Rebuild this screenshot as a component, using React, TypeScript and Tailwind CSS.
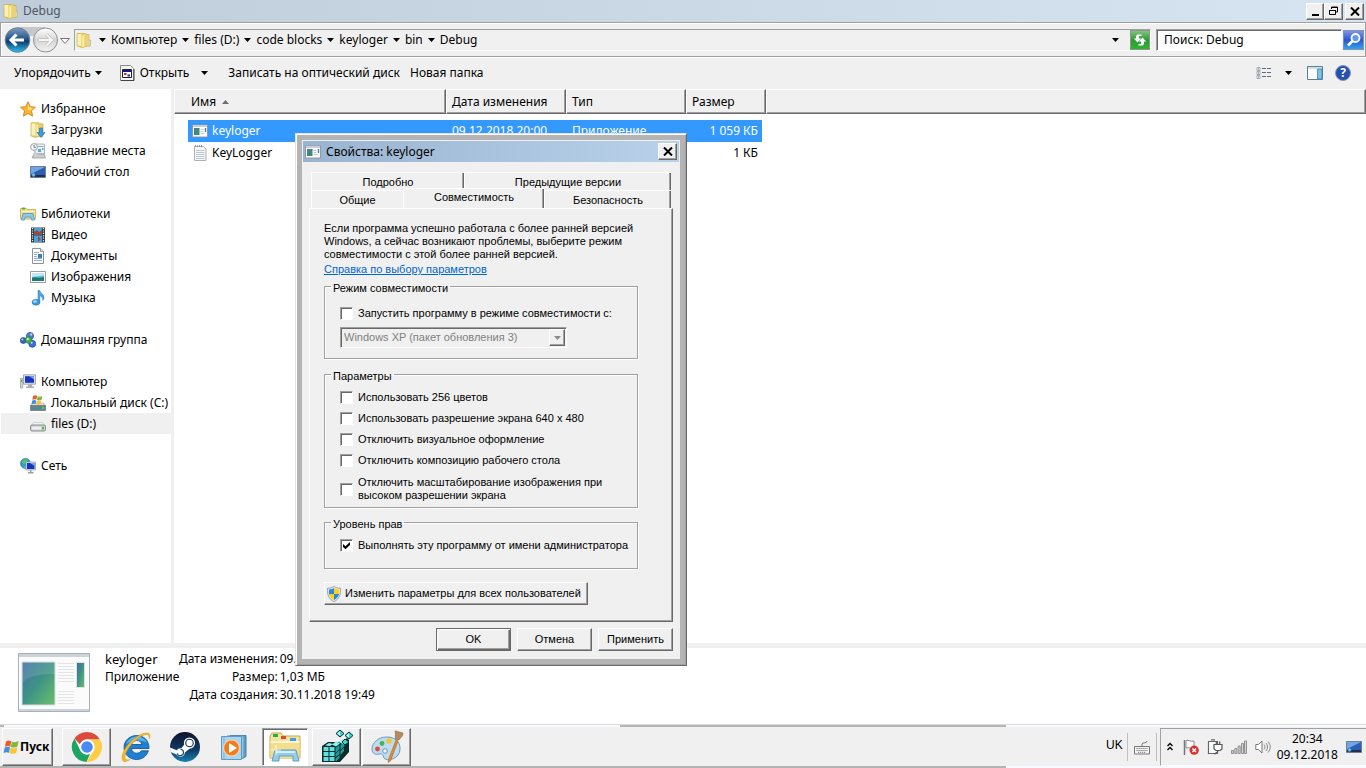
import React, { useState } from "react";

const raised =
  "border border-t-white border-l-white border-r-[#696969] border-b-[#696969] shadow-[inset_-1px_-1px_0_#a0a0a0] bg-[#f0f0f0]";
const sunken =
  "border border-t-[#a0a0a0] border-l-[#a0a0a0] border-r-white border-b-white shadow-[inset_1px_1px_0_#696969]";

type IconProps = { className?: string };

const Folder = ({ className = "size-4" }: IconProps) => (
  <svg viewBox="0 0 16 16" className={className}>
    <path d="M1 1.500h8.500l1 1h2.500V8h1.500v6l-5 .5-3 1.300L1 14z" fill="#e5c85f" stroke="#c9a83e" strokeWidth=".6" />
    <path d="M1.500 2h4v12l-4-.5z" fill="#fbf1b4" />
    <path d="M5.500 3l4-1.500v12.500l-4 1.700z" fill="#f0d878" />
    <path d="M6.500 4l1.500-.6v11l-1.500.6z" fill="#fbf0b2" />
    <path d="M9.500 3h3.300v11l-3.300.3z" fill="#ecd27a" />
    <path d="M12.500 8.500h1.700v5h-1.700z" fill="#c7d9dc" />
  </svg>
);

const Star = () => (
  <svg viewBox="0 0 16 16" className="size-4">
    <path
      d="M8 .8l2.200 4.900 5.200.5-3.900 3.600 1.100 5.300L8 12.400l-4.600 2.700 1.100-5.300L.6 6.200l5.200-.5z"
      fill="#ffb42e"
      stroke="#d97c1c"
      strokeWidth=".9"
    />
    <path d="M8 3l1.400 3.600 3.600.4-2.800 2.300L8 9z" fill="#ffe38a" />
  </svg>
);

const Downloads = () => (
  <svg viewBox="0 0 16 16" className="size-4">
    <path d="M1 .8h8l1 1h3v12.500l-5 .2-2 1L1 14z" fill="#e9cf70" stroke="#c9a83e" strokeWidth=".7" />
    <path d="M1.500 1.500h4v12l-4-.3z" fill="#fbf1b4" />
    <path d="M6.500 3l1.500-.6v11l-1.500.6z" fill="#fbf0b2" />
    <path d="M9.500 6h3v4.500H15L11 15.500 7 10.500h2.500z" fill="#3d9be0" stroke="#1c6fb5" strokeWidth=".6" />
  </svg>
);

const Recent = () => (
  <svg viewBox="0 0 16 16" className="size-4">
    <path d="M5 1h9.500v10H5z" fill="#eef2f5" stroke="#9aa5ad" strokeWidth=".8" />
    <path d="M8 6h3v3H8zM12 5h1.500v2H12z" fill="#5aa9dc" />
    <path d="M7.500 3.500h6" stroke="#9aa5ad" />
    <path d="M4 11h10l1.500 4H2z" fill="#c9ced2" stroke="#8a9298" strokeWidth=".7" />
    <path d="M4 8l3 2v2H3z" fill="#c9ced2" />
    <circle cx="4" cy="4" r="3.400" fill="#f4f8fb" stroke="#8f9aa3" strokeWidth=".9" />
    <path d="M4 2v2.300h1.800" fill="none" stroke="#4b5961" strokeWidth=".8" />
  </svg>
);

const Desktop = ({ className = "size-4" }: IconProps) => (
  <svg viewBox="0 0 16 16" className={className}>
    <path d="M.5 2.500h15v11H.5z" fill="#2c5fb4" stroke="#6d7f96" />
    <path d="M1 3h14L1 10z" fill="#6fa6e6" />
    <path d="M1 11h14v2H1z" fill="#22304c" />
    <circle cx="3.500" cy="11" r="1.800" fill="#4fb4ea" />
    <path d="M3 10h1v1H3z" fill="#f7c438" />
  </svg>
);

const Libraries = () => (
  <svg viewBox="0 0 16 16" className="size-4">
    <path d="M.5 2.500h6l1 1h8v9.500H.5z" fill="#f1dc87" stroke="#c9aa4b" strokeWidth=".8" />
    <path d="M2 1.500h3v2H2z" fill="#46b548" />
    <path d="M1 5h14v1H1z" fill="#fdf4c4" />
    <path d="M3 7.500h10l1.500 6.500h-3l-.7-3H5.200l-.7 3h-3z" fill="#8cc9ec" stroke="#4d95c4" strokeWidth=".8" />
  </svg>
);

const Video = () => (
  <svg viewBox="0 0 16 16" className="size-4">
    <path d="M1 .5h14v15H1z" fill="#343a40" />
    <path d="M4 1h8v6.500H4zM4 8.500h8V15H4z" fill="#4aa2dc" />
    <path d="M4 5l3-2 2 2 3-2v4.500H4zM8 9l3 3-3 3z" fill="#9b4a3c" />
    <path d="M2.500 1v14M13.500 1v14" stroke="#d9ecec" strokeWidth="1.200" strokeDasharray="1.200 1.200" />
  </svg>
);

const Documents = () => (
  <svg viewBox="0 0 16 16" className="size-4">
    <path d="M2.500.5h8l3 3v12h-11z" fill="#fff" stroke="#7b868f" strokeWidth=".9" />
    <path d="M10.500.5v3h3" fill="#dfe5ea" stroke="#7b868f" strokeWidth=".8" />
    <path d="M4 4.500h5M4 6.500h3M4 8.500h3M4 10.500h8M4 12.500h8" stroke="#8fa3ce" strokeWidth=".9" />
    <path d="M8 6h4v4H8z" fill="#3c7dcb" />
  </svg>
);

const Pictures = () => (
  <svg viewBox="0 0 16 16" className="size-4">
    <path d="M.5 2.500h15v11H.5z" fill="#fff" stroke="#8b949b" strokeWidth=".9" />
    <path d="M2 4h12v8H2z" fill="#5cb5e6" />
    <path d="M2 4h12v2.500L2 8z" fill="#c4e6f7" />
    <path d="M2 9c3-2 6 1 12-1v4H2z" fill="#1d7b70" />
  </svg>
);

const Music = () => (
  <svg viewBox="0 0 16 16" className="size-4">
    <path d="M8 .5h1.800c.2 3 4.200 3 4.200 7 0 1.500-.8 2.500-1.200 3C13.200 7.500 11 6 9.800 5.800V12H8z" fill="#4aa6e4" stroke="#2277b8" strokeWidth=".5" />
    <ellipse cx="6" cy="12.300" rx="4" ry="3" fill="#3698de" stroke="#2277b8" strokeWidth=".5" />
    <ellipse cx="5" cy="11.500" rx="2" ry="1.200" fill="#a5d8f6" />
  </svg>
);

const HomeGroup = () => (
  <svg viewBox="0 0 16 16" className="size-4">
    <circle cx="10" cy="4" r="3.600" fill="#4e7fd0" stroke="#25479e" strokeWidth=".7" />
    <circle cx="3.300" cy="8.500" r="3" fill="#3763c4" stroke="#25479e" strokeWidth=".7" />
    <circle cx="12.300" cy="11.800" r="3.500" fill="#3d6fd0" stroke="#25479e" strokeWidth=".7" />
    <circle cx="8.500" cy="8" r="3.300" fill="#45b04b" stroke="#277a35" strokeWidth=".7" />
    <circle cx="7.700" cy="6.900" r="1.200" fill="#c8f0c4" />
    <circle cx="11.200" cy="2.600" r="1.100" fill="#c2dcf8" />
    <circle cx="11.600" cy="10.800" r="1" fill="#c2dcf8" />
    <circle cx="2.400" cy="7.500" r=".9" fill="#c2dcf8" />
  </svg>
);

const Computer = () => (
  <svg viewBox="0 0 16 16" className="size-4">
    <path d="M3.500.8h12v9.400h-12z" fill="#dfe3e6" stroke="#8f979d" strokeWidth=".8" />
    <path d="M5 2.200h9v6.600H5z" fill="#1634c4" />
    <path d="M9 2.200h5v3z" fill="#7ea2f4" />
    <path d="M8 10.500h4v2H8zM6 12.500h8v1.500H6z" fill="#a8aeb3" />
    <path d="M.5 4.500h2.200V14H.5z" fill="#d5d9dc" stroke="#8f979d" strokeWidth=".7" />
    <path d="M1 6h1v2H1z" fill="#3fb34a" />
  </svg>
);

const Flag = ({ className = "size-4" }: IconProps) => (
  <svg viewBox="0 0 16 16" className={className}>
    <path d="M3 2.500C5 1 6.500 1.300 8.300 2.300L7.200 7.700C5.500 6.700 4 6.700 1.900 7.700z" fill="#ee5a2a" />
    <path d="M8.900 2.600c2 1 4 .8 6.700-.5l-1.100 5.500c-2.300 1.200-4.500 1.200-6.700.3z" fill="#7cbb3b" />
    <path d="M1.700 8.500c2-1.100 3.700-1 5.300-.2l-1.100 5.500c-1.600-.9-3.300-.9-5.300.1z" fill="#3f8fe0" />
    <path d="M7.600 8.700c2 1 4 .9 6.700-.3l-1.100 5.400c-2.300 1.200-4.500 1.200-6.700.2z" fill="#fbc231" />
  </svg>
);

const SystemDrive = () => (
  <svg viewBox="0 0 16 16" className="size-4">
    <path d="M2 8h12l1.500 3H.5z" fill="#dadfe2" stroke="#9aa1a6" strokeWidth=".5" />
    <path d="M.5 10.500h15v5H.5z" fill="#57898f" stroke="#73797d" strokeWidth=".8" />
    <path d="M12 12h2v2h-2z" fill="#5fd03c" />
    <path d="M3 1c1.500-1 2.800-.8 4.100-.2L6.500 4.600c-1.300-.6-2.700-.6-4.100.2z" fill="#ee5a2a" />
    <path d="M7.600 1.200c1.500.7 2.900.6 4.700-.2l-.7 3.800c-1.600.8-3.100.8-4.600.1z" fill="#7cbb3b" />
    <path d="M2.200 5.600c1.400-.8 2.800-.7 4-.1l-.6 3.600c-1.200-.6-2.600-.6-4 .1z" fill="#3f8fe0" />
    <path d="M6.800 5.700c1.500.7 2.900.6 4.600-.2l-.7 3.600c-1.600.8-3.100.8-4.500.1z" fill="#fbc231" />
  </svg>
);

const Drive = () => (
  <svg viewBox="0 0 16 16" className="size-4">
    <path d="M3.500 6.500h9l3 4H.5z" fill="#f3f4f5" stroke="#b5b9bc" strokeWidth=".6" />
    <rect x=".5" y="9" width="15" height="6" rx="1.500" fill="#cfd2d4" stroke="#7f8487" strokeWidth=".9" />
    <path d="M2 10.800h9v2.700H2z" fill="#edeef0" />
    <path d="M12 10.800h2v2.700h-2z" fill="#52c234" />
  </svg>
);

const Network = () => (
  <svg viewBox="0 0 16 16" className="size-4">
    <circle cx="5.500" cy="5.500" r="5" fill="#2e9bd6" stroke="#1b6aa5" strokeWidth=".6" />
    <path d="M2 3c2-2 5-2 6-1L6 5 3 6zM3 8l3 1-1 1.500z" fill="#58c65a" />
    <path d="M6 4h9.500v8H6z" fill="#dfe3e6" stroke="#8f979d" strokeWidth=".7" />
    <path d="M7 5h7.500v6H7z" fill="#1634c4" />
    <path d="M10 5h4.500v3z" fill="#7ea2f4" />
    <path d="M10 12h1.500v2h2v1.500H8V14h2z" fill="#9aa1a6" />
  </svg>
);

const AppWindow = ({ className = "size-4" }: IconProps) => (
  <svg viewBox="0 0 16 16" className={className}>
    <path d="M.5 2h15v12H.5z" fill="#fdfdfd" stroke="#8d9499" strokeWidth=".9" />
    <path d="M1 2.500h14v1.500H1z" fill="#c6ced6" />
    <path d="M2 5h5.500v7H2z" fill="#3f8c74" />
    <path d="M2 5h5.500L2 9.500z" fill="#4a7fa8" />
    <path d="M8.500 6.500h3M8.500 8.500h3M8.500 10.500h4" stroke="#c5cacf" />
    <path d="M12.800 5h1.400v4h-1.400z" fill="#4a83a0" />
  </svg>
);

const TextFile = () => (
  <svg viewBox="0 0 16 16" className="size-4">
    <path d="M2.500 1.500h9l2.500 2.500v11.500H2.500z" fill="#f4f6f7" stroke="#9aa0a4" strokeWidth=".8" />
    <path d="M4 5.500h8.500M4 7.500h8.500M4 9.500h8.500M4 11.500h8.500M4 13.500h8.500" stroke="#b6c5cf" strokeWidth=".9" />
    <path d="M3 1h8" stroke="#7d858a" strokeWidth="1.600" strokeDasharray="1 1" />
  </svg>
);

const Arrow = () => (
  <svg viewBox="0 0 7 4" className="h-1 w-[7px] shrink-0">
    <path d="M0 0h7L3.500 4z" fill="#000" />
  </svg>
);

const Shield = () => (
  <svg viewBox="0 0 16 16" className="size-4 shrink-0">
    <path d="M8 .4c2 1.400 4 1.800 6.500 1.800C15 8 13.500 13 8 15.700 2.500 13 1 8 1.500 2.200 4 2.200 6 1.800 8 .4z" fill="#e4e8ec" stroke="#8c949b" strokeWidth=".8" />
    <path d="M8 2v6H3C2.800 6.500 2.800 5 3 3.500 5 3.400 6.500 3 8 2z" fill="#2f86dc" />
    <path d="M8 2v6h5c.2-1.500.2-3 0-4.500C11 3.400 9.500 3 8 2z" fill="#fcd116" />
    <path d="M8 8v6c-3-1.600-4.500-3.500-5-6z" fill="#fcd116" />
    <path d="M8 8v6c3-1.600 4.500-3.500 5-6z" fill="#2f86dc" />
  </svg>
);

const sidebar = [
  [
    { name: "Избранное", icon: <Star /> },
    { name: "Загрузки", icon: <Downloads /> },
    { name: "Недавние места", icon: <Recent /> },
    { name: "Рабочий стол", icon: <Desktop /> },
  ],
  [
    { name: "Библиотеки", icon: <Libraries /> },
    { name: "Видео", icon: <Video /> },
    { name: "Документы", icon: <Documents /> },
    { name: "Изображения", icon: <Pictures /> },
    { name: "Музыка", icon: <Music /> },
  ],
  [{ name: "Домашняя группа", icon: <HomeGroup /> }],
  [
    { name: "Компьютер", icon: <Computer /> },
    { name: "Локальный диск (C:)", icon: <SystemDrive /> },
    { name: "files (D:)", icon: <Drive />, active: true },
  ],
  [{ name: "Сеть", icon: <Network /> }],
];

const crumbs = ["Компьютер", "files (D:)", "code blocks", "keyloger", "bin", "Debug"];

function TitleBar() {
  return (
    <header className="flex h-[22px] items-center bg-linear-to-r from-[#bfcddb] to-[#d7e4f2] pl-[3px] pr-[2px]">
      <Folder />
      <h1 className="ml-1 flex-1 text-[#4c5560]">Debug</h1>
      <button aria-label="Свернуть" className={`${raised} flex h-[17px] w-[18px] items-end justify-center pb-[3px]`}>
        <span className="h-[2px] w-[7px] bg-black" />
      </button>
      <button aria-label="Восстановить" className={`${raised} flex h-[17px] w-[19px] items-center justify-center`}>
        <svg viewBox="0 0 11 10" className="h-[10px] w-[11px]">
          <path d="M3.500 3V1h6v5H8M3 1.500h7M1.500 4.500h6v4h-6zM1 4.500h7" fill="none" stroke="#000" />
        </svg>
      </button>
      <button aria-label="Закрыть" className={`${raised} ml-[2px] flex h-[17px] w-[19px] items-center justify-center`}>
        <svg viewBox="0 0 10 9" className="h-[9px] w-[10px]">
          <path d="M1 .5l8 8M9 .5l-8 8" stroke="#000" strokeWidth="2" />
        </svg>
      </button>
    </header>
  );
}

function AddressBar() {
  return (
    <div className="flex h-[35px] items-center border border-[#a0a0a0] shadow-[inset_1px_1px_0_#fff] pl-[3px] pr-px">
      <svg viewBox="0 0 67 28" className="h-7 w-[67px]">
        <defs>
          <linearGradient id="back" x1="0" y1="0" x2="0" y2="1">
            <stop offset="0" stopColor="#7d9fc0" />
            <stop offset=".5" stopColor="#1d4f84" />
            <stop offset=".55" stopColor="#0d3a6b" />
            <stop offset="1" stopColor="#2bc0f4" />
          </linearGradient>
          <linearGradient id="fwd" x1="0" y1="0" x2="0" y2="1">
            <stop offset="0" stopColor="#fff" />
            <stop offset=".5" stopColor="#d4d4d4" />
            <stop offset="1" stopColor="#f4f4f4" />
          </linearGradient>
        </defs>
        <path d="M14 1h27v6c-6 4-20 4-27 0z" fill="#c4c8cc" />
        <circle cx="13.500" cy="14" r="12.300" fill="url(#back)" stroke="#6c7f92" />
        <path d="M7 14h13M12.500 8.500L7 14l5.500 5.500" fill="none" stroke="#fff" strokeWidth="3" />
        <circle cx="41.500" cy="14" r="12" fill="url(#fwd)" stroke="#8b8f93" />
        <path d="M35 14h13M42.500 8.500L48 14l-5.500 5.500" fill="none" stroke="#bfbfbf" strokeWidth="3.400" />
        <path d="M35 14h12.500M42.500 8.500L48 14l-5.500 5.500" fill="none" stroke="#f5f5f5" strokeWidth="2" />
        <path d="M56.500 12.500h9l-4.500 5z" fill="#fff" stroke="#777" />
      </svg>
      <nav className="ml-[3px] flex h-[22px] flex-1 items-center border border-t-[#a0a0a0] border-l-[#a0a0a0] border-r-white border-b-white pl-px">
        <Folder className="mr-[2px] size-4" />
        {crumbs.map((crumb) => (
          <div key={crumb} className="flex items-center">
            <span className="flex w-[17px] justify-center">
              <Arrow />
            </span>
            <a href="#">{crumb}</a>
          </div>
        ))}
        <span className="ml-auto mr-[11px]">
          <Arrow />
        </span>
        <button aria-label="Обновить" className="flex size-5 items-center justify-center border border-[#8a9a8a] bg-linear-to-b from-[#7cc67c] via-[#2f9a35] to-[#2db52f]">
          <svg viewBox="0 0 18 18" className="size-[18px]">
            <path d="M6 3.500h4.500v1.500H8v2.500h2.200L6.500 11.500 2.800 7.500H5V5.500z" fill="#fff" />
            <path d="M12 14.500H7.500V13H10v-2.500H7.800l3.700-4 3.700 4H13v2z" fill="#fff" />
          </svg>
        </button>
      </nav>
      <input
        type="text"
        aria-label="Поиск"
        defaultValue="Поиск: Debug"
        className={`${sunken} ml-[5px] h-[22px] w-[186px] bg-white pl-[7px]`}
      />
      <button aria-label="Найти" className="ml-px flex h-5 w-[21px] items-center justify-center border border-[#7f93b5] bg-linear-to-b from-[#7f93e6] via-[#2a55cf] to-[#35a4f0]">
        <svg viewBox="0 0 16 16" className="size-4">
          <circle cx="9.500" cy="6" r="4" fill="#5e9bf0" stroke="#fff" strokeWidth="1.800" />
          <path d="M6.500 9L2 13.500" stroke="#fff" strokeWidth="2.600" />
        </svg>
      </button>
    </div>
  );
}

function Toolbar() {
  return (
    <div className="flex h-8 items-center border-t border-white pr-[15px] pb-px pl-[14px]">
      <button className="flex items-center gap-1">
        Упорядочить <Arrow />
      </button>
      <button className="ml-[18px] flex items-center gap-1">
        <svg viewBox="0 0 16 16" className="size-4">
          <path d="M.5.500h10l3 3v12H.5z" fill="#f4f4f4" stroke="#8a8a8a" />
          <path d="M14 4v11.500H1" fill="none" stroke="#444" />
          <path d="M2.500 4.500h9v8h-9z" fill="#fff" stroke="#222" />
          <path d="M3 5h8v2H3z" fill="#14148c" />
          <path d="M4 8h2.500v2H4z" fill="#d22" />
          <path d="M7.500 9.500H10v2H7.500z" fill="#22b" />
        </svg>
        Открыть
      </button>
      <button aria-label="Открыть с помощью" className="ml-3 py-2">
        <Arrow />
      </button>
      <button className="ml-5">Записать на оптический диск</button>
      <button className="ml-[10px]">Новая папка</button>
      <button aria-label="Вид" className="ml-auto flex items-center gap-[13px]">
        <svg viewBox="0 0 16 14" className="h-[14px] w-4">
          <path d="M1 1.500h3v3H1zM1 5.500h3v3H1zM1 9.500h3v3H1z" fill="#fff" stroke="#8c9aa8" strokeWidth=".8" />
          <path d="M2 2.500h1v1H2z" fill="#46a" />
          <path d="M2 6.500h1v1H2z" fill="#d22" />
          <path d="M2 10.500h1v1H2z" fill="#46a" />
          <path d="M6 2.500h4M11 2.500h4M6 6.500h4M11 6.500h4M6 10.500h4M11 10.500h4" stroke="#5a6c86" />
        </svg>
        <Arrow />
      </button>
      <button aria-label="Область просмотра" className="ml-[15px]">
        <svg viewBox="0 0 16 14" className="block h-[14px] w-4">
          <path d="M.5.500h15v13H.5z" fill="#fff" stroke="#5b7f9a" />
          <path d="M1 1h14v2H1z" fill="#cfe0ec" />
          <path d="M10.500 3h4.500v10h-4.500z" fill="#7cc4e0" stroke="#3b87ad" strokeWidth=".8" />
        </svg>
      </button>
      <button aria-label="Справка" className="ml-3 flex size-4 items-center justify-center rounded-full border border-[#8d99ad] bg-[#2450b4] text-xs leading-none font-bold text-white">
        ?
      </button>
    </div>
  );
}

function Sidebar() {
  return (
    <nav className="w-[171px] shrink-0 bg-white pt-[9px] pl-px">
      {sidebar.map((group) => (
        <ul key={group[0].name} className="mb-[21px]">
          {group.map((item, i) => (
            <li key={item.name}>
              <a
                href="#"
                className={`flex h-[21px] items-center gap-[5px] whitespace-nowrap ${i === 0 ? "pl-[19px]" : "pl-[29px]"} ${
                  "active" in item ? "bg-[#f0f0f0]" : ""
                }`}
              >
                {item.icon}
                {item.name}
              </a>
            </li>
          ))}
        </ul>
      ))}
    </nav>
  );
}

const columnHead =
  "h-[25px] border-t border-l border-r border-b border-t-white border-l-white border-r-[#696969] border-b-[#696969] bg-[#f0f0f0] p-0 pl-[5px] text-left font-normal shadow-[inset_-1px_-1px_0_#a0a0a0]";

function FileList() {
  return (
    <div className="flex-1 bg-white">
      <table className="w-full table-fixed border-separate border-spacing-0">
        <thead>
          <tr>
            <th className={`${columnHead} w-[272px]`}>
              <span className="flex items-center gap-[6px] pl-[11px]">
                Имя
                <svg viewBox="0 0 7 4" className="h-1 w-[7px]">
                  <path d="M0 4h7L3.500 0z" fill="#6d6d6d" />
                </svg>
              </span>
            </th>
            <th className={`${columnHead} w-[120px]`}>Дата изменения</th>
            <th className={`${columnHead} w-[120px]`}>Тип</th>
            <th className={`${columnHead} w-[80px]`}>Размер</th>
            <th className={columnHead} aria-label="Пусто" />
          </tr>
        </thead>
        <tbody>
          <tr className="h-[6px]">
            <td colSpan={5} />
          </tr>
          <tr className="h-[22px] text-white">
            <td className="border-l-14 border-transparent bg-[#3399ff] bg-clip-padding p-0 pl-1">
              <span className="flex items-center gap-1">
                <AppWindow />
                keyloger
              </span>
            </td>
            <td className="bg-[#3399ff] p-0 pl-[6px]">09.12.2018 20:00</td>
            <td className="bg-[#3399ff] p-0 pl-[6px]">Приложение</td>
            <td className="border-r-4 border-transparent bg-[#3399ff] bg-clip-padding p-0 pr-1 text-right">1 059 КБ</td>
            <td />
          </tr>
          <tr className="h-[22px]">
            <td className="border-l-14 border-transparent p-0 pl-1">
              <span className="flex items-center gap-1">
                <TextFile />
                KeyLogger
              </span>
            </td>
            <td />
            <td />
            <td className="border-r-4 border-transparent p-0 pr-1 text-right">1 КБ</td>
            <td />
          </tr>
        </tbody>
      </table>
    </div>
  );
}

function DetailsPane() {
  return (
    <section className="flex h-[77px] items-start border-b border-[#dcdcdc] bg-white pt-[2px] pl-4">
      <svg viewBox="0 0 76 64" className="mt-[2px] h-16 w-[76px]">
        <defs>
          <linearGradient id="thumb" x1="0" y1="0" x2="1" y2="1">
            <stop offset="0" stopColor="#3f6fa6" />
            <stop offset=".5" stopColor="#3f9485" />
            <stop offset="1" stopColor="#6cc06a" />
          </linearGradient>
        </defs>
        <path d="M2.500 1.500h71v58h-71z" fill="#fbfbfc" stroke="#a9b0b8" />
        <path d="M3 2h70v3H3zM3 57h70v2H3z" fill="#cdd3da" />
        <path d="M6 10h33v43H6z" fill="url(#thumb)" stroke="#d5dde0" />
        <path d="M6 32c4-8 18-10 33-10V10H6z" fill="#fff" opacity=".12" />
        <path d="M42 11.500h16M42 14.500h16M42 17.500h16M42 20.500h16M42 23.500h16M42 26.500h16M42 29.500h16M42 39.500h16M42 42.500h16M42 45.500h16M42 48.500h16M42 51.500h16" stroke="#e2e4e6" />
        <path d="M60.500 10.500h8v25h-8z" fill="url(#thumb)" stroke="#dde1e4" />
      </svg>
      <div className="ml-[13px] w-[74px] leading-[18px]">
        <p className="text-[13px]">keyloger</p>
        <p>Приложение</p>
      </div>
      <dl className="grid grid-cols-[auto_auto] gap-x-[2px] leading-[18px]">
        <dt className="text-right">Дата изменения:</dt>
        <dd>09.12.2018 20:00</dd>
        <dt className="text-right">Размер:</dt>
        <dd>1,03 МБ</dd>
        <dt className="text-right">Дата создания:</dt>
        <dd>30.11.2018 19:49</dd>
      </dl>
    </section>
  );
}

type CheckProps = {
  label: string;
  checked?: boolean;
  className?: string;
};

function Check({ label, checked = false, className = "h-[21px]" }: CheckProps) {
  const [on, setOn] = useState(checked);
  return (
    <label className={`flex items-center gap-[5px] ${className}`}>
      <span className={`${sunken} relative size-[13px] shrink-0 bg-white`}>
        <input
          type="checkbox"
          checked={on}
          onChange={(e) => setOn(e.target.checked)}
          className="absolute inset-0 size-full appearance-none"
        />
        {on && (
          <svg viewBox="0 0 7 7" className="absolute top-[2px] left-[2px] size-[7px]">
            <path d="M0 2v3l2.500 2.200L7 3V0L2.500 4.200z" fill="#000" />
          </svg>
        )}
      </span>
      <span className="leading-[13px]">{label}</span>
    </label>
  );
}

const group =
  "mr-[34px] ml-[14px] border border-[#a0a0a0] pr-[9px] pl-[15px] shadow-[1px_1px_0_#fff,inset_1px_1px_0_#fff]";
const legend = "-ml-[9px] px-[2px] pt-1 leading-[13px]";
const backTab =
  "border-t border-l border-white pt-[2px] text-center leading-[13px] shadow-[inset_-1px_0_0_#696969,inset_-2px_0_0_#a0a0a0]";
const dialogButton = `${raised} h-[23px] w-[75px]`;

function PropertiesDialog() {
  return (
    <div
      role="dialog"
      aria-label="Свойства: keyloger"
      className="absolute top-[133px] left-[295px] w-[392px] border border-t-[#e3e3e3] border-r-[#696969] border-b-[#696969] border-l-[#e3e3e3] bg-[#b4b4b4] p-[5px] shadow-[inset_1px_1px_0_#fff,inset_-1px_-1px_0_#a0a0a0] font-['Liberation_Sans',sans-serif] text-[11px]"
    >
      <div className="border border-[#b4b4b4] bg-[#f0f0f0] p-px">
        <div className="flex h-[21px] items-center bg-linear-to-r from-[#99b4d1] to-[#b9d1ea] px-[2px] font-['Noto_Sans','Open_Sans',sans-serif] text-xs">
          <AppWindow />
          <h2 className="ml-[5px] flex-1">Свойства: keyloger</h2>
          <button aria-label="Закрыть" className={`${raised} flex h-[17px] w-[19px] items-center justify-center`}>
            <svg viewBox="0 0 10 9" className="h-[9px] w-[10px]">
              <path d="M1 .5l8 8M9 .5l-8 8" stroke="#000" strokeWidth="2" />
            </svg>
          </button>
        </div>

        <div className="px-[6px] pt-[10px] pb-[7px]">
          <div role="tablist" className="px-[2px]">
            <div className="flex h-[18px]">
              <button role="tab" className={`${backTab} w-[153px]`}>Подробно</button>
              <button role="tab" className={`${backTab} flex-1`}>Предыдущие версии</button>
            </div>
            <div className="flex h-[18px] items-end">
              <button role="tab" className="h-[18px] w-[92px] border-t border-l border-white pt-[2px] leading-[13px]">
                Общие
              </button>
              <button
                role="tab"
                aria-selected="true"
                className="relative h-5 w-[141px] border-t border-l border-white bg-[#f0f0f0] pb-[2px] shadow-[inset_-1px_0_0_#696969,inset_-2px_0_0_#a0a0a0]"
              >
                Совместимость
              </button>
              <button role="tab" className={`${backTab} h-[18px] flex-1`}>Безопасность</button>
            </div>
          </div>

          <div role="tabpanel" className={`${raised} pt-[13px] pb-4`}>
            <div className="px-[14px] leading-[13px]">
              <p className="whitespace-nowrap">
                Если программа успешно работала с более ранней версией
                <br />
                Windows, а сейчас возникают проблемы, выберите режим
                <br />
                совместимости с этой более ранней версией.
              </p>
              <a href="#" className="mt-[2px] block text-[#0066cc] underline">
                Справка по выбору параметров
              </a>
            </div>

            <fieldset className={`${group} mt-[2px] h-[81px]`}>
              <legend className={legend}>Режим совместимости</legend>
              <Check label="Запустить программу в режиме совместимости с:" className="mt-2 h-[21px] whitespace-nowrap" />
              <div className="relative mt-[3px] w-[227px]">
                <select
                  disabled
                  aria-label="Версия Windows"
                  className={`${sunken} block h-[21px] w-full appearance-none pl-[3px] text-[#808080]`}
                >
                  <option>Windows XP (пакет обновления 3)</option>
                </select>
                <span className={`${raised} pointer-events-none absolute top-[2px] right-[2px] flex h-[17px] w-4 items-center justify-center`}>
                  <svg viewBox="0 0 7 4" className="h-1 w-[7px]">
                    <path d="M0 0h7L3.500 4z" fill="#8a8a8a" />
                  </svg>
                </span>
              </div>
            </fieldset>

            <fieldset className={`${group} mt-[7px] h-[142px]`}>
              <legend className={legend}>Параметры</legend>
              <div className="mt-1">
                <Check label="Использовать 256 цветов" />
                <Check label="Использовать разрешение экрана 640 x 480" />
                <Check label="Отключить визуальное оформление" />
                <Check label="Отключить композицию рабочего стола" />
                <Check label="Отключить масштабирование изображения при высоком разрешении экрана" className="mt-[3px] h-[30px]" />
              </div>
            </fieldset>

            <fieldset className={`${group} mt-[6px] h-[55px]`}>
              <legend className={legend}>Уровень прав</legend>
              <Check label="Выполнять эту программу от имени администратора" checked className="mt-1 h-[21px] whitespace-nowrap" />
            </fieldset>

            <button className={`${raised} mt-[13px] ml-[14px] flex h-[23px] w-[264px] items-center gap-[3px] pl-px whitespace-nowrap`}>
              <Shield />
              Изменить параметры для всех пользователей
            </button>
          </div>

          <div className="mt-[6px] flex justify-end gap-[6px]">
            <button className="h-[23px] w-[75px] border border-[#696969] shadow-[inset_1px_1px_0_#fff,inset_-1px_-1px_0_#696969,inset_-2px_-2px_0_#a0a0a0]">
              OK
            </button>
            <button className={dialogButton}>Отмена</button>
            <button className={dialogButton}>Применить</button>
          </div>
        </div>
      </div>
    </div>
  );
}

const Chrome = () => (
  <svg viewBox="0 0 32 32" className="size-8">
    <circle cx="16" cy="16" r="15" fill="#fff" />
    <path d="M16 1a15 15 0 0 1 13 7.500H16A7.500 7.500 0 0 0 9 13.500L3.500 7.500A15 15 0 0 1 16 1z" fill="#dd4b3e" />
    <path d="M3.500 7.500l6 12.300A7.500 7.500 0 0 0 16 23.500l3-.6L15.500 31A15 15 0 0 1 3.500 7.500z" fill="#1da362" />
    <path d="M16 8.500h13A15 15 0 0 1 15.500 31l7-11.300A7.500 7.500 0 0 0 16 8.500z" fill="#ffcd46" />
    <circle cx="16" cy="16" r="7.500" fill="#fff" />
    <circle cx="16" cy="16" r="5.800" fill="#4a8af4" />
  </svg>
);

const Explorer = () => (
  <svg viewBox="0 0 32 32" className="size-8">
    <path
      d="M29 17.500H11.500c.3 3 2.500 4.700 5.200 4.700 2 0 3.600-.8 4.700-2.400h7C26.800 25 22.300 28.500 16.700 28.500 9.500 28.500 4 23.500 4 16.600S9.500 4.500 16.700 4.500c7.200 0 12.600 5.200 12.300 13zM11.600 13.500h10.200c-.4-2.500-2.400-4-5-4s-4.700 1.500-5.200 4z"
      fill="#1f7fd0"
      stroke="#0d4f94"
      strokeWidth=".8"
    />
    <path d="M6 13c2-5 6-7.500 11-7.500 4 0 8 2 10 6-6-3-14-3-21 1.500z" fill="#6cc5f5" opacity=".7" />
    <path d="M29 8c2-4 1-6.500-3-6C16 3 2 17 2 27c0 4 3 5 8 1.500C6 29.500 4.500 28 5 25 6.500 17 18 4.500 26 3.500c2.500-.3 3.500 1.500 3 4.500z" fill="#f3b92c" stroke="#c98a12" strokeWidth=".4" />
  </svg>
);

const Steam = () => (
  <svg viewBox="0 0 32 32" className="size-8">
    <defs>
      <linearGradient id="steam" x1="0" y1="0" x2="0" y2="1">
        <stop offset="0" stopColor="#10132c" />
        <stop offset=".6" stopColor="#123a66" />
        <stop offset="1" stopColor="#1583b4" />
      </linearGradient>
    </defs>
    <circle cx="16" cy="16" r="15" fill="url(#steam)" />
    <path d="M1 16.500l9 3.700 6.500-8.200 5 5-7 5.500-3 2.500-4-1.500-6-2.500z" fill="#fff" />
    <circle cx="20.500" cy="12" r="5.600" fill="#fff" />
    <circle cx="20.500" cy="12" r="4.300" fill="#14264d" />
    <circle cx="20.500" cy="12" r="3.200" fill="#fff" />
    <circle cx="11.500" cy="21.500" r="4.300" fill="#fff" />
    <path d="M8.200 22.300a3.200 3.200 0 1 0 3.300-4" fill="none" stroke="#14446e" strokeWidth="1.100" />
  </svg>
);

const MediaPlayer = () => (
  <svg viewBox="0 0 32 32" className="size-8">
    <path d="M12 4.500h16v21l-4 2z" fill="#5f9dc4" stroke="#477fa5" />
    <path d="M9 5h17v22H9z" fill="#8fc3e2" stroke="#5c93b8" />
    <path d="M3.500 5.500h20v23h-20z" fill="#a9d6ee" stroke="#5c9cc4" />
    <path d="M6 6v22" stroke="#7db4d4" />
    <circle cx="13.500" cy="17" r="8" fill="#f07c1e" stroke="#fbd3ad" strokeWidth="1.200" />
    <path d="M11 12l8 5-8 5z" fill="#fff" />
  </svg>
);

const FileManager = () => (
  <svg viewBox="0 0 36 32" className="h-8 w-9">
    <path d="M3 5l2-3h9l2 3h17v22H3z" fill="#f5e3a0" stroke="#c9a54b" />
    <path d="M6 3h5v3H6z" fill="#25b13a" />
    <path d="M14 5h5v3h-5z" fill="#dc4830" />
    <path d="M23 7h6v3h-6z" fill="#3aa3e8" />
    <path d="M3.500 10h29v17h-29z" fill="#f3de8e" />
    <path d="M3.500 10h29v2h-29z" fill="#fdf5cf" />
    <path d="M8 19h21l3 11h-6v-5H12v5H5z" fill="#93cdea" stroke="#5b9fc6" />
    <path d="M9 20h19v2H9z" fill="#d6effa" />
    <path d="M9 14v10M4 19h10" stroke="#fff" strokeWidth=".8" />
  </svg>
);

const Regedit = () => (
  <svg viewBox="0 0 34 34" className="size-[34px]">
    <path d="M2 16l6-4h14l5-4 2 2v12l-9 10H2z" fill="#0c2b2b" />
    <path d="M3.500 17h5v4h-5zM9.500 17h5v4h-5zM3.500 22h5v4h-5zM9.500 22h5v4h-5zM3.500 27h5v4h-5zM9.500 27h5v4h-5z" fill="#5fe0e0" />
    <path d="M15.500 18l4-3v4l-4 4zM15.500 24l4-4v4l-4 3zM15.500 28.500l4-3.500v3l-3 3h-1zM20.500 15l4-3v4l-4 4zM20.500 21l3.500-3v3l-3.500 4z" fill="#1b9f9f" />
    <path d="M5 15.500l4-2.500 4 1-3 2zM12 14.500l4-3 4 2-4 3zM18 12l5-3 4 2-4 3z" fill="#8ff0f0" />
    <path d="M20 0l4 3.500L20 7l-4-3.500zM29 2l4 3.500L29 9l-4-3.500zM25 9l4 3-4 3-3-3z" fill="#3fd0d0" stroke="#0c2b2b" />
    <path d="M20 1.200v4.600l-2.800-2.300zM29 3.200v4.600l-2.800-2.300z" fill="#b8f7f7" />
  </svg>
);

const Paint = () => (
  <svg viewBox="0 0 34 34" className="size-[34px]">
    <path d="M17 7C8 7 2 13 2 19c0 5 4 6 7 5s4 1 5 4c3 4 16 1 16-9 .5-7-5-12-13-12z" fill="#bcdcf0" stroke="#6a9cc0" />
    <circle cx="7.500" cy="19" r="2.400" fill="#e2463f" />
    <circle cx="12" cy="13.500" r="2.400" fill="#4bb04f" />
    <circle cx="19" cy="11" r="2.700" fill="#f4c534" />
    <circle cx="15" cy="21" r="2.300" fill="#f0f0f0" stroke="#6a9cc0" />
    <path d="M26 10l2 1-7.500 20-2.500 1.500.5-3z" fill="#e08a35" stroke="#b0641c" strokeWidth=".6" />
    <path d="M25 1l8 2c0 3-2 4-4 7l-3.500-1C25 6 26 4 25 1z" fill="#b58a62" stroke="#8a6340" strokeWidth=".6" />
  </svg>
);

const launcher = "flex h-[38px] w-[49px] items-center justify-center";

function Tray() {
  return (
    <div className="ml-auto flex h-[38px] items-stretch">
      <button className="pr-1 pb-1 font-['Liberation_Sans',sans-serif]">UK</button>
      <div className="my-[5px] flex items-center border-x border-[#c0c0c0] px-[6px]">
        <svg viewBox="0 0 16 16" className="size-4">
          <path d="M.5 7.500h15v7.500H.5z" fill="#f4f4f4" stroke="#777" />
          <path d="M2.500 9.500h11M2.500 11.500h11M4 13.300h8" stroke="#777" strokeDasharray="1.200 .8" />
          <path d="M8 7V5c0-2 5 0 5-3" fill="none" stroke="#777" />
        </svg>
      </div>
      <div className="ml-[3px] flex items-center border-t border-l border-[#a0a0a0] border-b border-b-white pl-[6px]">
        <svg viewBox="0 0 6 9" className="h-[9px] w-[6px]">
          <path d="M.5 4L3 1.500 5.500 4M.5 8L3 5.500 5.500 8" fill="none" stroke="#000" strokeWidth="1.300" />
        </svg>
        <svg viewBox="0 0 16 16" className="ml-[10px] size-4">
          <path d="M1.500 1v15" stroke="#777" strokeWidth="1.500" />
          <path d="M3 1.500c3-1 4 1.500 8 .5v7c-4 1-5-1-8 0z" fill="#fff" stroke="#888" />
          <circle cx="11.200" cy="11.200" r="4.600" fill="#d8322c" />
          <path d="M9.400 9.400l3.600 3.600M13 9.400L9.400 13" stroke="#fff" strokeWidth="1.400" />
        </svg>
        <svg viewBox="0 0 16 16" className="ml-2 size-4">
          <path d="M4 .8h4M1.500 2.500h9v12h-9z" fill="#fff" stroke="#666" strokeWidth="1.200" />
          <path d="M7 5.500h8V10l-2 1.500H9L7 10zM9.300 2.500v3M12.700 2.500v3M11 11.500c0 3-3 1-3 4" fill="#fff" stroke="#555" strokeWidth="1.200" />
        </svg>
        <svg viewBox="0 0 16 16" className="ml-2 size-4">
          <path d="M.5 11.500h2v3h-2zM3.800 9.500h2v5h-2zM7.200 7h2v7.500h-2zM10.500 4.500h2v10h-2zM13.500 2h2v12.500h-2z" fill="#d4d4d4" stroke="#7d7d7d" strokeWidth=".8" />
        </svg>
        <svg viewBox="0 0 16 16" className="ml-2 size-4">
          <path d="M.8 5.500h2.500L7 2v12l-3.700-3.500H.8z" fill="#fff" stroke="#777" />
          <path d="M9 5.500c1.300 1.500 1.300 3.500 0 5M11 4c2 2.500 2 5.500 0 8M13 2.500c3 3.500 3 7.500 0 11" fill="none" stroke="#888" />
        </svg>
        <time className="ml-[6px] text-center leading-4">
          20:34
          <br />
          09.12.2018
        </time>
        <button aria-label="Свернуть все окна" className="mr-1 ml-2">
          <Desktop className="block size-4" />
        </button>
      </div>
    </div>
  );
}

function Taskbar() {
  return (
    <footer className="flex flex-col bg-[#f0f0f0]">
      <div className="flex h-[2px] bg-[#f6f9fd]">
        <span className="w-1 bg-[#b4b4b4]" />
        <span className="ml-[616px] w-[386px] bg-[#b4b4b4]" />
      </div>
      <div className="flex h-[39px] items-center pl-[2px]">
        <button className={`${raised} mr-[9px] flex h-[38px] w-[51px] items-center gap-px font-bold`}>
          <Flag className="size-4 shrink-0" />
          Пуск
        </button>
        <button aria-label="Chrome" className={`${launcher} ${raised}`}>
          <Chrome />
        </button>
        <button aria-label="Internet Explorer" className={launcher}>
          <Explorer />
        </button>
        <button aria-label="Steam" className={launcher}>
          <Steam />
        </button>
        <button aria-label="Проигрыватель" className={launcher}>
          <MediaPlayer />
        </button>
        <button aria-label="Проводник" className={`${sunken} mx-[4px] flex h-[38px] w-[46px] items-center justify-center bg-white`}>
          <FileManager />
        </button>
        <button aria-label="Редактор реестра" className={`${launcher} ${raised}`}>
          <Regedit />
        </button>
        <button aria-label="Paint" className={`${launcher} ${raised} ml-px`}>
          <Paint />
        </button>
        <Tray />
      </div>
      <div className="flex h-[2px] bg-[#f6f9fd]">
        <span className="w-[1006px] bg-[#b4b4b4]" />
      </div>
    </footer>
  );
}

export default function App() {
  return (
    <div className="relative flex min-h-screen flex-col bg-[#f0f0f0] font-['Noto_Sans','Open_Sans',sans-serif] text-xs text-black">
      <TitleBar />
      <AddressBar />
      <Toolbar />
      <main className="flex flex-1 gap-[3px]">
        <Sidebar />
        <FileList />
      </main>
      <div className="h-[5px]" />
      <DetailsPane />
      <Taskbar />
      <PropertiesDialog />
    </div>
  );
}
